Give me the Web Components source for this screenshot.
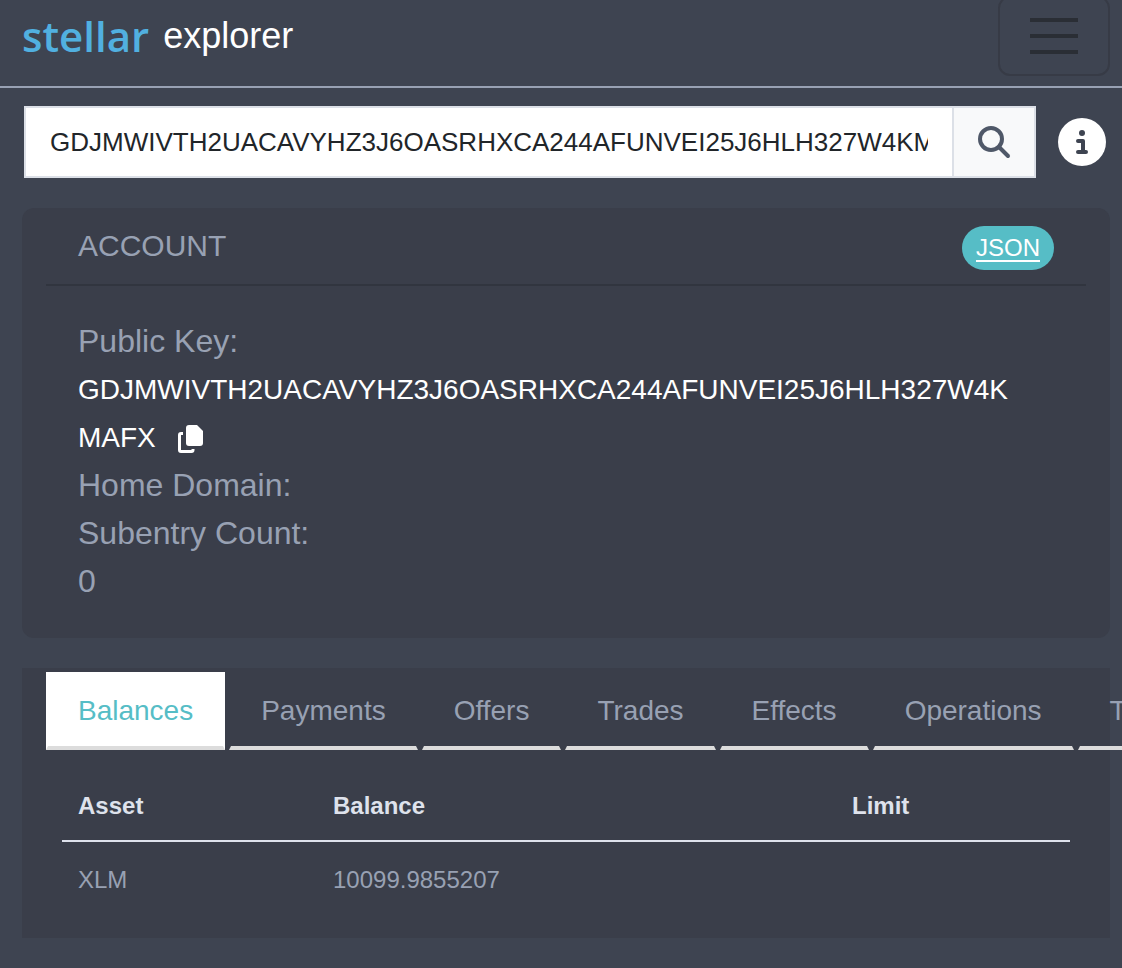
<!DOCTYPE html>
<html lang="en">
<head>
<meta charset="utf-8">
<meta name="viewport" content="width=device-width, initial-scale=1">
<title>Stellar Explorer</title>
<style>
  :root {
    --page: #3e4451;
    --card: #3a3e4a;
    --muted: #98a1b3;
    --pale: #dee2ec;
    --teal: #56bdc6;
  }
  body {
    margin: 0;
    background: var(--page);
    color: var(--muted);
    font-family: "Liberation Sans", Arial, sans-serif;
  }
</style>
</head>
<body>
<explorer-app></explorer-app>

<script>
const define = (name, html, setup) => {
  const template = document.createElement("template");
  template.innerHTML = html;
  customElements.define(name, class extends HTMLElement {
    constructor() {
      super();
      this.attachShadow({ mode: "open" }).append(template.content.cloneNode(true));
    }
    connectedCallback() {
      if (setup) setup(this, this.shadowRoot);
    }
  });
};

define("site-header", `
  <style>
    :host { display: block; border-bottom: 2px solid var(--muted); }
    header { display: flex; justify-content: space-between; height: 86px; padding: 0 12px 0 22px; }
    a { display: flex; align-items: center; gap: 14px; height: 72px; line-height: 72px; color: #fff; font-size: 36px; text-decoration: none; }
    .brand { color: #51b0e0; font: 600 42px/72px "Open Sans", "Noto Sans", sans-serif; }
    button { box-sizing: border-box; width: 112px; height: 80px; margin: -4px 0 0; padding: 0; background: none; border: 2px solid #373b46; border-radius: 12px; }
    svg { display: block; margin: auto; }
  </style>
  <header>
    <a href="#"><span class="brand">stellar</span><span>explorer</span></a>
    <button type="button" aria-label="Toggle navigation">
      <svg width="60" height="60" viewBox="0 0 60 60" fill="none" stroke="#2a2e35" stroke-width="4"><path d="M6 14h48M6 30h48M6 46h48"/></svg>
    </button>
  </header>`);

define("search-bar", `
  <style>
    :host { display: block; padding: 18px 16px 0 24px; }
    form { display: flex; align-items: center; }
    input { box-sizing: border-box; flex: 1; min-width: 0; height: 72px; margin: 0; padding: 0 24px; background: #fff; color: #212529; border: 2px solid #dce0e7; border-right: 0; border-radius: 0; font: 26px "Liberation Sans", Arial, sans-serif; outline: none; }
    .go { box-sizing: border-box; width: 84px; height: 72px; padding: 0; background: #f8f9fa; border: 2px solid #dce0e7; }
    .info { width: 48px; height: 48px; margin-left: 22px; padding: 0; border: 0; border-radius: 50%; background: #fff; }
    svg { display: block; margin: auto; }
  </style>
  <form role="search">
    <input type="text" aria-label="Search" value="GDJMWIVTH2UACAVYHZ3J6OASRHXCA244AFUNVEI25J6HLH327W4KMAFX">
    <button class="go" type="button" aria-label="Go">
      <svg width="36" height="36" viewBox="0 0 36 36" fill="none" stroke="#4f5868" stroke-width="4"><circle cx="15" cy="15" r="11"/><path d="M23 23L32 32" stroke-linecap="round"/></svg>
    </button>
    <button class="info" type="button" aria-label="Information">
      <svg width="48" height="48" viewBox="0 0 48 48" fill="none" stroke="#3e4451" stroke-width="4" stroke-linejoin="round" stroke-linecap="round"><circle cx="24" cy="15" r="3" fill="#3e4451" stroke="none"/><path d="M20 23h5v11M20 34h8"/></svg>
    </button>
  </form>`);

define("account-card", `
  <style>
    :host { display: block; padding: 0 24px; background: var(--card); border-radius: 12px; }
    header { display: flex; align-items: center; justify-content: space-between; box-sizing: border-box; height: 78px; padding: 0 32px; border-bottom: 2px solid #31353f; }
    h2 { margin: 0; font-size: 30px; font-weight: 400; }
    header a { margin-top: 4px; padding: 0 14px; border-radius: 22px; background: var(--teal); color: #fff; font-size: 24px; line-height: 44px; text-underline-offset: 4px; }
    dl { margin: 0; padding: 31px 32px 33px; font-size: 32px; line-height: 48px; }
    dd { margin: 0; min-height: 48px; }
    dd:empty { min-height: 0; }
    .key { box-sizing: border-box; height: 96px; padding: 1px 32px 0 0; color: #fff; font-size: 28px; word-break: break-all; }
    button { margin: 0 0 0 16px; padding: 0; border: 0; background: none; vertical-align: middle; line-height: 0; }
  </style>
  <header><h2>ACCOUNT</h2><a href="#json">JSON</a></header>
  <dl>
    <dt>Public Key:</dt>
    <dd class="key"><span></span><button type="button" aria-label="Copy public key"><svg width="36" height="32" viewBox="0 0 36 32"><path d="M11 9.500H9a1.500 1.500 0 0 0-1.500 1.500v15a1.500 1.500 0 0 0 1.500 1.500h10.500a1.500 1.500 0 0 0 1.500-1.500v-1" fill="none" stroke="#fff" stroke-width="3"/><path d="M17 1h8l6 6v12a3 3 0 0 1-3 3H17a3 3 0 0 1-3-3V4a3 3 0 0 1 3-3z" fill="#fff"/></svg></button></dd>
    <dt>Home Domain:</dt><dd></dd>
    <dt>Subentry Count:</dt><dd>0</dd>
  </dl>`, (host, root) => {
    root.querySelector(".key span").textContent = host.getAttribute("public-key");
  });

define("tab-item", `
  <style>
    :host { display: block; flex: none; }
    button { display: block; box-sizing: border-box; height: 78px; padding: 3px 30px 0; background: none; color: var(--muted); border: 2px solid transparent; border-top: 0; border-bottom: 4px solid #dcdcdc; border-radius: 0; font: 28px "Liberation Sans", Arial, sans-serif; }
    :host([selected]) button { background: #fff; color: var(--teal); }
  </style>
  <button type="button" role="tab"><slot></slot></button>`, (host, root) => {
    root.querySelector("button").setAttribute("aria-selected", host.hasAttribute("selected"));
  });

define("balance-table", `
  <style>
    :host { display: block; padding: 20px 40px; }
    table { width: 100%; table-layout: fixed; border-collapse: separate; border-spacing: 0; font-size: 24px; line-height: 36px; }
    th, td { padding: 20px 16px; text-align: left; }
    th { padding: 18px 16px 16px; color: var(--pale); border-bottom: 2px solid var(--pale); }
    .asset { width: 223px; }
    .limit { width: 202px; }
  </style>
  <table>
    <thead><tr><th class="asset">Asset</th><th>Balance</th><th class="limit">Limit</th></tr></thead>
    <tbody><tr><td>XLM</td><td>10099.9855207</td><td></td></tr></tbody>
  </table>`);

define("explorer-app", `
  <style>
    :host { display: block; overflow-x: clip; }
    main { display: flex; flex-direction: column; gap: 30px; padding: 30px 12px 30px 22px; }
    .panel { padding-top: 4px; background: var(--card); }
    nav { display: flex; gap: 4px; padding-left: 24px; }
  </style>
  <site-header></site-header>
  <search-bar></search-bar>
  <main>
    <account-card public-key="GDJMWIVTH2UACAVYHZ3J6OASRHXCA244AFUNVEI25J6HLH327W4KMAFX"></account-card>
    <section class="panel">
      <nav role="tablist">
        <tab-item selected>Balances</tab-item>
        <tab-item>Payments</tab-item>
        <tab-item>Offers</tab-item>
        <tab-item>Trades</tab-item>
        <tab-item>Effects</tab-item>
        <tab-item>Operations</tab-item>
        <tab-item>Transactions</tab-item>
      </nav>
      <balance-table></balance-table>
    </section>
  </main>`);
</script>
</body>
</html>
